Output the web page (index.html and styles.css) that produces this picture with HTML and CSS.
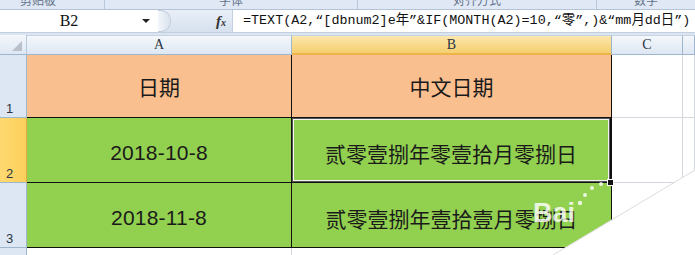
FILE: index.html
```html
<!DOCTYPE html>
<html lang="zh-CN">
<head>
    <meta charset="UTF-8">
    <title>中文日期</title>
    <link rel="stylesheet" href="styles.css">
</head>
<body>
    <div class="ribbon">
        <div class="group g1">剪贴板</div>
        <div class="group g2">字体</div>
        <div class="group g3">对齐方式</div>
        <div class="group g4">数字</div>
    </div>

    <div class="formula-bar">
        <div class="name-box">
            <span class="name">B2</span>
            <span class="arrow"></span>
        </div>
        <div class="bar-mid">
            <span class="splitter"></span>
            <span class="fx"><i>f</i><small>x</small></span>
        </div>
        <div class="formula">=TEXT(A2,“[dbnum2]e年”&amp;IF(MONTH(A2)=10,“零”,)&amp;“mm月dd日”)</div>
    </div>
    <div class="bar-gap"></div>

    <div class="sheet">
        <div class="hd corner"><span class="tri"></span></div>
        <div class="hd col">A</div>
        <div class="hd col sel">B</div>
        <div class="hd col">C</div>
        <div class="hd col"></div>

        <div class="hd row">1</div>
        <div class="cell head">日期</div>
        <div class="cell head">中文日期</div>
        <div class="cell"></div>
        <div class="cell"></div>

        <div class="hd row sel">2</div>
        <div class="cell data num">2018-10-8</div>
        <div class="cell data active">贰零壹捌年零壹拾月零捌日</div>
        <div class="cell"></div>
        <div class="cell"></div>

        <div class="hd row">3</div>
        <div class="cell data num">2018-11-8</div>
        <div class="cell data">贰零壹捌年壹拾壹月零捌日</div>
        <div class="cell"></div>
        <div class="cell"></div>

        <div class="hd row"></div>
        <div class="cell"></div>
        <div class="cell"></div>
        <div class="cell"></div>
        <div class="cell"></div>
    </div>

    <!-- page curl + watermark on top of the sheet -->
    <svg class="curl" width="695" height="255" viewBox="0 0 695 255">
        <text x="533" y="222" class="bai">Bai</text>
        <circle cx="580" cy="203" r="2.2" fill="#fff" opacity="0.8"/>
        <circle cx="585" cy="195" r="2" fill="#fff" opacity="0.8"/>
        <circle cx="592" cy="188" r="2" fill="#fff" opacity="0.8"/>
        <circle cx="601" cy="184" r="2" fill="#fff" opacity="0.8"/>
        <polygon points="553,255 695,170 695,255" fill="#fff"/>
        <line x1="553" y1="255" x2="695" y2="170" stroke="#dcdcdc" stroke-width="1"/>
    </svg>
</body>
</html>
```

FILE: styles.css
```css
body {
    margin: 0;
    width: 695px;
    height: 255px;
    overflow: hidden;
    position: relative;
    background-color: #fff;
    font-family: "Liberation Sans", "Noto Sans CJK SC", sans-serif;
}

/* ribbon group labels, only their lower half is visible */
.ribbon {
    display: flex;
    height: 9px;
    overflow: hidden;
    background-color: #dfe8f4;
    border-bottom: 1px solid #b4c4d8;
}
.group {
    font-size: 12px;
    line-height: 12px;
    margin-top: -5px;
    color: #65748a;
    text-align: center;
    border-right: 1px solid #b9c8da;
}
.g1 { width: 105px; text-align: left; padding-left: 20px; box-sizing: border-box; }
.g2 { width: 252px; }
.g3 { width: 238px; }
.g4 { flex: 1; border-right: none; }

/* formula bar */
.formula-bar {
    display: flex;
    height: 22px;
    background-color: #dbe5f1;
    border-bottom: 1px solid #c3cfde;
}
.name-box {
    width: 158px;
    background-color: #fff;
    position: relative;
    display: flex;
    align-items: center;
    justify-content: center;
}
.name {
    font-family: "Liberation Serif", serif;
    font-size: 16px;
    color: #111;
    margin-left: -20px;
}
.arrow {
    position: absolute;
    left: 142px;
    top: 9px;
    border-left: 4px solid transparent;
    border-right: 4px solid transparent;
    border-top: 4px solid #222;
}
.bar-mid {
    width: 74px;
    display: flex;
    align-items: center;
    justify-content: space-between;
    background: linear-gradient(#e9eff8, #d6e1ef);
}
.splitter {
    width: 12px;
    height: 20px;
    border-radius: 0 10px 10px 0;
    background: linear-gradient(90deg, #f3f6fa, #d9e2ee);
    border: 1px solid #c3cfde;
    border-left: none;
}
.fx {
    font-family: "Liberation Serif", serif;
    font-weight: bold;
    font-size: 15px;
    color: #333;
    margin-right: 6px;
}
.fx small {
    font-size: 10px;
    font-style: italic;
}
.formula {
    flex: 1;
    background-color: #fff;
    border-left: 1px solid #c3cfde;
    padding-left: 10px;
    font-family: "Liberation Mono", "Noto Sans CJK SC", monospace;
    font-size: 13.4px;
    line-height: 22px;
    white-space: nowrap;
    color: #111;
}
.bar-gap {
    height: 2px;
    background-color: #dbe5f1;
}

/* sheet */
.sheet {
    display: grid;
    grid-template-columns: 27px 265px 320px 71px 1fr;
    grid-template-rows: 20px 63px 65px 65px 1fr;
    height: 221px;
}
.hd {
    box-sizing: border-box;
    background: linear-gradient(#f4f7fb, #dde7f3);
    border-right: 1px solid #9eb6ce;
    border-bottom: 1px solid #9eb6ce;
    color: #2a3544;
    font-family: "Liberation Serif", serif;
    font-size: 14px;
}
.corner {
    position: relative;
    border-right-color: #b5c7da;
}
.tri {
    position: absolute;
    right: 4px;
    bottom: 3px;
    width: 10px;
    height: 10px;
    background-color: #b7c0cb;
    clip-path: polygon(100% 0, 100% 100%, 0 100%);
}
.col {
    display: flex;
    align-items: center;
    justify-content: center;
    border-top: 1px solid #c6d4e4;
}
.col.sel {
    background: linear-gradient(#fbe6ad, #f6cf6e);
    border-bottom: 2px solid #eeb44c;
}
.row {
    display: flex;
    align-items: flex-end;
    padding-left: 6px;
    padding-bottom: 1px;
    background: #dde7f3;
    font-family: "Liberation Sans", sans-serif;
    font-size: 13px;
}
.row.sel {
    background: linear-gradient(90deg, #ffd970, #fbcf5c);
    border-right-color: #e2a93c;
}

.cell {
    box-sizing: border-box;
    border-right: 1px solid #d4d8de;
    border-bottom: 1px solid #d4d8de;
    display: flex;
    align-items: center;
    justify-content: center;
    font-size: 21px;
    color: #1a1a1a;
}
.head {
    background-color: #fabf8f;
    border-right-color: #111;
    border-bottom-color: #111;
}
.data {
    background-color: #92d050;
    border-right-color: #111;
    border-bottom-color: #111;
    padding-top: 5px;
}
.num {
    font-family: "Liberation Sans", sans-serif;
    font-size: 21px;
    letter-spacing: 0.2px;
}
.active {
    position: relative;
    box-shadow: inset 0 0 0 1px #555, inset 0 0 0 2px #f4f4f4;
    border-right: 2px solid #111;
}
.active::after {
    content: "";
    position: absolute;
    right: -4px;
    bottom: -4px;
    width: 5px;
    height: 5px;
    background-color: #111;
    border: 1px solid #fff;
}

.curl {
    position: absolute;
    left: 0;
    top: 0;
    pointer-events: none;
}
.bai {
    font-family: "Liberation Sans", sans-serif;
    font-weight: bold;
    font-size: 27px;
    fill: #fff;
    opacity: 0.8;
}
```
